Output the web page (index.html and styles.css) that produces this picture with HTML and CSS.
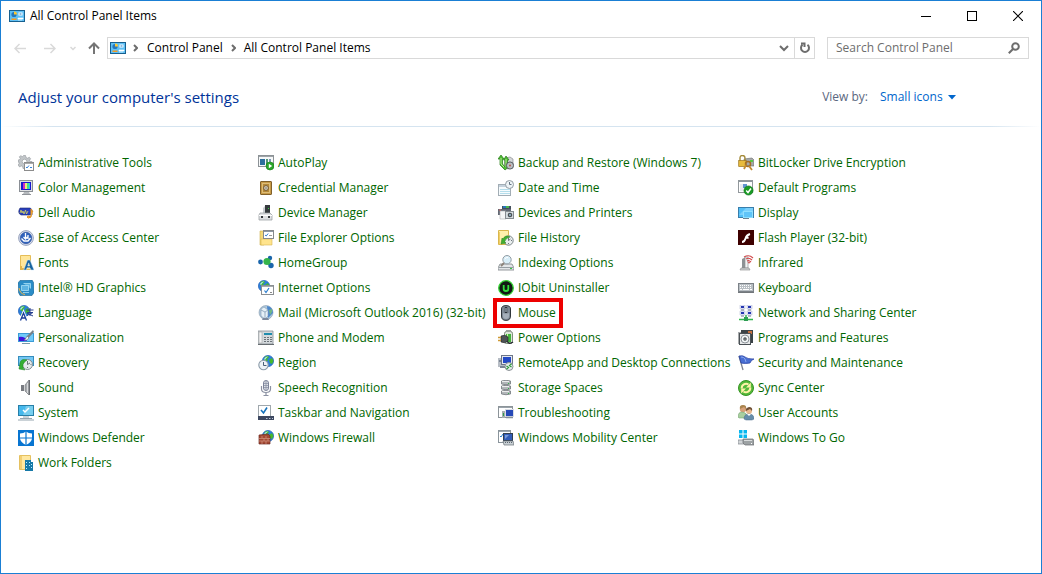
FILE: index.html
```html
<!DOCTYPE html>
<html lang="en">
<head>
    <meta charset="UTF-8">
    <meta name="viewport" content="width=device-width, initial-scale=1.0">
    <title>All Control Panel Items</title>
    <link rel="stylesheet" href="styles.css">
</head>
<body>
    <!-- shared symbols -->
    <svg class="defs" width="0" height="0" aria-hidden="true">
        <symbol id="panel" viewBox="0 0 16 16">
            <rect x=".5" y="2.500" width="15" height="11" fill="#5fc0f5" stroke="#17608f"/>
            <circle cx="5" cy="6.500" r="2.600" fill="#2477bd"/>
            <path d="M5 6.500V3.500a3 3 0 0 1 3 3z" fill="#ffc72e"/>
            <path d="M9.500 4.500h4v3h-4z" fill="#fff"/><path d="M10.500 5.500h2v1h-2z" fill="#2477bd"/>
            <path d="M2.500 10.500h5v1.500h-5z" fill="#f59b20"/><path d="M9 10h5v1H9zM9 12h4" stroke="#fff" fill="#fff" stroke-width=".6"/>
        </symbol>
        <symbol id="globe" viewBox="0 0 12 12">
            <circle cx="6" cy="6" r="5.600" fill="#2b7fdb" stroke="#2462b8" stroke-width=".7"/>
            <path d="M3 1.500l3-.5 1 1.500-2 1.500 1 1.500-2 1-2-2zM7 5l3-2 1.500 3-1.500 3-2-1zM3 8l2 1v2l-2-1z" fill="#45b92e"/>
            <path d="M2 4q1.500-3 4-2.500Q4 3 3 5z" fill="#bfe9ff" opacity=".9"/>
        </symbol>
    </svg>

    <div class="window">
        <header class="titlebar">
            <svg class="icon"><use href="#panel"/></svg>
            <span class="title">All Control Panel Items</span>
            <div class="caption-buttons">
                <button aria-label="Minimize"><svg width="10" height="10"><path d="M0 5.500h10" stroke="#000"/></svg></button>
                <button aria-label="Maximize"><svg width="10" height="10"><rect x=".5" y=".5" width="9" height="9" fill="none" stroke="#000"/></svg></button>
                <button aria-label="Close"><svg width="10" height="10"><path d="M0 0l10 10M10 0L0 10" stroke="#000" stroke-width="1.100"/></svg></button>
            </div>
        </header>

        <nav class="toolbar">
            <div class="nav-buttons">
                <button class="off" aria-label="Back"><svg width="12" height="11" viewBox="0 0 12 11"><path d="M12 5.500H1M5.500 1L1 5.500 5.500 10"/></svg></button>
                <button class="off" aria-label="Forward"><svg width="12" height="11" viewBox="0 0 12 11"><path d="M0 5.500h11M6.500 1L11 5.500 6.500 10"/></svg></button>
                <button class="off recent" aria-label="Recent locations"><svg width="6" height="5" viewBox="0 0 6 5"><path d="M.5 1L3 3.500 5.500 1"/></svg></button>
                <button class="up" aria-label="Up"><svg width="12" height="12" viewBox="0 0 12 12"><path d="M6 12V1.500M1 6.500l5-5 5 5"/></svg></button>
            </div>
            <div class="address">
                <svg class="icon"><use href="#panel"/></svg>
                <svg class="chevron" width="5" height="8"><path d="M1 1l3 3-3 3"/></svg>
                <a href="#">Control Panel</a>
                <svg class="chevron" width="5" height="8"><path d="M1 1l3 3-3 3"/></svg>
                <a href="#">All Control Panel Items</a>
                <button class="history" aria-label="Previous locations"><svg width="10" height="7" viewBox="0 0 10 7"><path d="M1 1l4 4 4-4"/></svg></button>
                <button class="refresh" aria-label="Refresh"><svg width="12" height="12" viewBox="0 0 12 12"><path d="M8.500 2.800a4 4 0 1 1-5 0M2 1.500h3.500V5"/></svg></button>
            </div>
            <div class="search">
                <input type="text" aria-label="Search Control Panel" placeholder="Search Control Panel">
                <svg width="12" height="12" viewBox="0 0 12 12"><circle cx="7.500" cy="4.500" r="3.300"/><path d="M5 7L.8 11.200"/></svg>
            </div>
        </nav>

        <main>
            <div class="heading">
                <h1>Adjust your computer's settings</h1>
                <label for="view">View by:</label>
                <div class="view">
                    <select id="view">
                        <option>Small icons</option>
                    </select>
                    <svg width="8" height="5"><path d="M0 0h8L4 4.500z" fill="#0066cc"/></svg>
                </div>
            </div>

            <ul class="items">
                <li><a href="#"><svg class="icon" viewBox="0 0 16 16"><path d="M5.500.5h2l.5 2 1.500.7 1.800-1 1.300 1.500-1 1.600.5 1.200H14v2l-7 5H5l-.3-2-1.500-.6-1.700 1L.2 10l1-1.700L.7 7H.2V5l1.600-.5.5-1-1-1.700L2.800.7l1.700 1z" fill="#c2c6c9" stroke="#90969b" stroke-width=".6"/><circle cx="6.500" cy="6.500" r="2.300" fill="#fff" stroke="#93989c" stroke-width=".6"/><rect x="6.500" y="7.500" width="9" height="8" fill="#fff" stroke="#8c8c8c"/><path d="M6.500 8.500h9" stroke="#aaa"/><path d="M8 12l1 1 2-2.500M12 12.500h2" fill="none" stroke="#3a85d8"/></svg>Administrative Tools</a></li>
                <li><a href="#"><svg class="icon" viewBox="0 0 16 16"><rect x=".5" y=".5" width="15" height="11" fill="#f6f8f9" stroke="#8c9296"/><path d="M1 1.500h14" stroke="#9ea3a7"/><path d="M2 4h5v6H2z" fill="#2d6f9c"/><path d="M8 4h2v6H8z" fill="#539779"/><path d="M11 4h2v3h-2z" fill="#7c98b3"/><circle cx="12" cy="11" r="4" fill="#2ba52b" stroke="#168016" stroke-width=".6"/><path d="M10.800 8.800v4.400l3.400-2.200z" fill="#fff"/></svg>AutoPlay</a></li>
                <li><a href="#"><svg class="icon" viewBox="0 0 16 16"><path d="M7 3l5-1 3 2v7l-5 3-4-2z" fill="#d3d6d8" stroke="#7c8083" stroke-width=".6"/><path d="M0 4l3-4 3 4H4.500v5L7 12V5H5.500L8 1l3 4H9.500v8L7 15 2 10V4z" fill="#4fba34" stroke="#267c19" stroke-width=".7"/><path d="M3 3v6l3 3M8 4v8" stroke="#b7ef91" fill="none"/><circle cx="12" cy="10.500" r="3.600" fill="#b9bdc2" stroke="#3f4347" stroke-width=".8"/><circle cx="12" cy="10.500" r="1" fill="#b95a4a"/></svg>Backup and Restore (Windows 7)</a></li>
                <li><a href="#"><svg class="icon" viewBox="0 0 16 16"><path d="M6 4l8-1 2 2v6H7z" fill="#a6a9a9" stroke="#686c6c" stroke-width=".6"/><path d="M12 5h3v2h-3z" fill="#57c843"/><path d="M2 6V3q0-2.500 2.500-2.500T7 3v3" fill="none" stroke="#a48a39" stroke-width="1.400"/><rect x=".7" y="5.500" width="7.500" height="6" fill="#e8bb3c" stroke="#9b741b" stroke-width=".7"/><circle cx="10" cy="9" r="2.500" fill="none" stroke="#a46e24" stroke-width="1.500"/><path d="M8 10l-2 4M11 11l3 4" stroke="#c18a30" stroke-width="1.800"/></svg>BitLocker Drive Encryption</a></li>

                <li><a href="#"><svg class="icon" viewBox="0 0 16 16"><rect x="1.500" y=".5" width="13" height="11" fill="#dee0e2" stroke="#8a8f95"/><path d="M3 2h10v8H3z" fill="#1818cf"/><path d="M5 3h2v6H5z" fill="#d02cc4"/><path d="M7 3h2v6H7z" fill="#f0ef76"/><path d="M9 3h2v6H9z" fill="#47df8a"/><path d="M11 3h1v6h-1z" fill="#2ac2ff"/><path d="M6 12h5l1 2H5z" fill="#b5b9bd"/><path d="M4 14.500h9" stroke="#8f9398" fill="none"/></svg>Color Management</a></li>
                <li><a href="#"><svg class="icon" viewBox="0 0 16 16"><rect x="2.500" y="1.500" width="11" height="13" rx=".5" fill="#c79a47" stroke="#80602b"/><rect x="4.500" y="3.500" width="7" height="9" fill="#b58838" stroke="#ddbd78"/><circle cx="8" cy="8" r="2.400" fill="#f2ead5" stroke="#6d5634"/><path d="M6.500 8h3M8 6.500v3" stroke="#7c776d" stroke-width=".7"/></svg>Credential Manager</a></li>
                <li><a href="#"><svg class="icon" viewBox="0 0 16 16"><rect x=".5" y="4.500" width="12" height="11" fill="#f6fbfd" stroke="#a2adb5"/><path d="M1 6h11" stroke="#c5d2dc" stroke-width="2"/><path d="M2.500 9.500h9M2.500 11.500h9M2.500 13.500h9" stroke="#72bfd8" stroke-dasharray="1 1"/><circle cx="11.500" cy="4.500" r="4" fill="#edf3f6" stroke="#939ca3"/><path d="M11.500 2v2.500h2" fill="none" stroke="#637280"/></svg>Date and Time</a></li>
                <li><a href="#"><svg class="icon" viewBox="0 0 16 16"><rect x=".5" y=".5" width="14" height="12" fill="#fff" stroke="#92989c"/><path d="M1 1.500h13" stroke="#8c979e"/><path d="M2 4h3v7H2z" fill="#e7ecf0"/><path d="M5 4h4v4H5z" fill="#6095d1"/><circle cx="10.500" cy="10.500" r="4.600" fill="#199b25" stroke="#0d7019" stroke-width=".6"/><path d="M8.200 10.600l1.800 1.900 3-4" fill="none" stroke="#fff" stroke-width="1.500"/></svg>Default Programs</a></li>

                <li><a href="#"><svg class="icon" viewBox="0 0 16 16"><path d="M2 3h10q3 1 2 7H3Q-1 8 2 3z" fill="#293ebc" stroke="#1b286f" stroke-width=".6"/><path d="M2 8l1-3 1 3 1-2 1 3 1.500-4 1 4 1.500-3" fill="none" stroke="#d7d660" stroke-width=".8"/><path d="M13 12V4l2 3M13 12q-3-2-4 0 1 2 4 0" fill="#f5b143" stroke="#e49120"/></svg>Dell Audio</a></li>
                <li><a href="#"><svg class="icon" viewBox="0 0 16 16"><path d="M7 0h5v9H7z" fill="#363b3e"/><path d="M5 3l2-2v8H5z" fill="#c9ced1"/><path d="M10 3h1v1h-1z" fill="#3bd741"/><path d="M2 8h10l2 2v5H1v-5z" fill="#dfe1e3" stroke="#94989c" stroke-width=".7"/><path d="M3 11h2v2H3zM10 11h2v2h-2z" fill="#34383c"/><path d="M1 10.500h13" stroke="#fff"/></svg>Device Manager</a></li>
                <li><a href="#"><svg class="icon" viewBox="0 0 16 16"><path d="M4 1h9v5H4z" fill="#44515d"/><path d="M5 1h3v2H5z" fill="#2976ba"/><path d="M8 1h3v2H8z" fill="#49b64e"/><path d="M0 4h13v6H0z" fill="#636974"/><path d="M2 6h6v8H2z" fill="#f5f6f7" stroke="#adb0b3" stroke-width=".6"/><path d="M1 5h2" stroke="#df6e67"/><rect x="7.500" y="6.500" width="8" height="7" fill="#d4dbdf" stroke="#868c91"/><circle cx="12" cy="10" r="2.300" fill="#4b5055"/><circle cx="12" cy="10" r="1" fill="#9ac0d4"/></svg>Devices and Printers</a></li>
                <li><a href="#"><svg class="icon" viewBox="0 0 16 16"><rect x=".5" y="2.500" width="15" height="10" fill="#52bff7" stroke="#397eab"/><path d="M1 10l7-7h7v7z" fill="#7bd0fb"/><rect x="5.500" y="6.500" width="9" height="6" fill="#5fc4f8" stroke="#8fe0ff"/><path d="M5 13h6v1H5z" fill="#6c8290"/></svg>Display</a></li>

                <li><a href="#"><svg class="icon" viewBox="0 0 16 16"><circle cx="8" cy="8" r="7.400" fill="#d8dfef" stroke="#8490ae" stroke-width=".8"/><circle cx="8" cy="8" r="5.700" fill="#2f62bd" stroke="#264a92" stroke-width=".6"/><path d="M7.500 3v6M3.500 8.500L6 11h4l2.500-3M10 5v4M5.500 7l2 2 2-2" fill="none" stroke="#fff" stroke-width="1.300"/></svg>Ease of Access Center</a></li>
                <li><a href="#"><svg class="icon" viewBox="0 0 16 16"><path d="M2 1h4v14H2z" fill="#f4d875" stroke="#cfae4a" stroke-width=".6"/><path d="M3 9h11v6H3z" fill="#ffe48d" stroke="#d9b752" stroke-width=".6"/><rect x="5.500" y=".5" width="10" height="8" fill="#fff" stroke="#86898c"/><path d="M6 1.500h9" stroke="#8d98a5"/><path d="M7 5l1.200 1 2-2.500" stroke="#337fd1" fill="none"/><path d="M11 5.500h3" stroke="#999"/></svg>File Explorer Options</a></li>
                <li><a href="#"><svg class="icon" viewBox="0 0 16 16"><path d="M.5.5h10v14H.5z" fill="#fff0ac" stroke="#d9b74d"/><path d="M1 2h1v12H1z" fill="#f1ce65"/><circle cx="10.500" cy="10.500" r="4.700" fill="#e9eeef" stroke="#7b8587"/><path d="M10.500 7.500v3l2-1.500M14 10.500h-1M10.500 14v-1" stroke="#4c575c" fill="none" stroke-width=".8"/><path d="M4 8l-1 6 5-1-1.300-1.300Q8 7.500 12 7 7 4.500 5 9z" fill="#41af31" stroke="#247f19" stroke-width=".5"/></svg>File History</a></li>
                <li><a href="#"><svg class="icon" viewBox="0 0 16 16"><path d="M0 0h16v15H0z" fill="#3e0000"/><path d="M4 12q2.500 0 3.500-3.500T12 4M7 7.700h3.600" fill="none" stroke="#fff" stroke-width="1.900"/></svg>Flash Player (32-bit)</a></li>

                <li><a href="#"><svg class="icon" viewBox="0 0 16 16"><path d="M2.500.5h10v14h-10z" fill="#ffe699" stroke="#e5bd58"/><path d="M2 11v4h5l-1-2H4v-2z" fill="#e1b54c"/><path d="M5.700 15h2.500l.8-2.200h3L13 15h3L12 5H9.500zm4-4l1-3.100 1 3.100z" fill="#18649f" stroke="#cce9ff" stroke-width=".5"/></svg>Fonts</a></li>
                <li><a href="#"><svg class="icon" viewBox="0 0 16 16"><path d="M9 7l3-4M9 7l4 3" stroke="#2d9a8c" stroke-width="2.500" fill="none"/><circle cx="2.500" cy="7" r="2.400" fill="#1965ab"/><circle cx="12" cy="3" r="2.200" fill="#1965ab"/><circle cx="13" cy="10.500" r="2.700" fill="#1965ab"/><circle cx="9" cy="6.500" r="3.600" fill="#35b44c"/></svg>HomeGroup</a></li>
                <li><a href="#"><svg class="icon" viewBox="0 0 16 16"><path d="M2 9h12l2 4v2H0v-2z" fill="#e3e6e8" stroke="#7b8185" stroke-width=".8"/><path d="M1 12.500h14" stroke="#969ea3"/><path d="M12 13h2v1h-2z" fill="#38c541"/><circle cx="9" cy="4.700" r="4.200" fill="#d8eef8" stroke="#939da4"/><path d="M6 8L3 11" stroke="#8b8178" stroke-width="1.800"/><path d="M6.800 4Q8 2 10 2.500" stroke="#fff" fill="none"/></svg>Indexing Options</a></li>
                <li><a href="#"><svg class="icon" viewBox="0 0 16 16"><path d="M4 4l4-2v11l-4 2z" fill="#8d9295"/><path d="M7 2h3v11H7z" fill="#f3f4f4" stroke="#919497" stroke-width=".7"/><path d="M3 13h8l1 2H2z" fill="#cfd2d3" stroke="#888" stroke-width=".6"/><path d="M6 2q5-3 9 1M8 4q3-2 6 1M9 6q2-1 4 1M10 8q1-1 2 0" fill="none" stroke="#d0484a" stroke-width="1.100"/></svg>Infrared</a></li>

                <li><a href="#"><svg class="icon" viewBox="0 0 16 16"><path d="M2 .5L14 0l1.500 2.500.5 10-2 3H2l-1.500-3L0 3z" fill="#2b8cc6" stroke="#17618e" stroke-width=".6"/><path d="M3.500 5.500h7v5h-7zM5.500 3.500h7v5M5 12.500h6" fill="#5db4e2" stroke="#a9dff6" stroke-width=".8"/><path d="M1 8q1 6 6 6.500" stroke="#efb54b" fill="none"/></svg>Intel® HD Graphics</a></li>
                <li><a href="#"><svg class="icon" viewBox="0 0 16 16"><use href="#globe" x="0" y="0" width="12" height="12"/><rect x="3.500" y="5.500" width="12" height="9" fill="#fff" stroke="#8b8f92"/><path d="M4 6.500h11" stroke="#a5aaae"/><path d="M6.500 10.500l1.500 2 3-4.500" fill="none" stroke="#287ccf" stroke-width="1.200"/><path d="M12 12.500h2" stroke="#888"/></svg>Internet Options</a></li>
                <li><a href="#"><svg class="icon" viewBox="0 0 16 16"><circle cx="8" cy="8" r="7.300" fill="#121a14" stroke="#35d334" stroke-width="1.300"/><path d="M5.700 5v4q0 2 2.300 2t2.300-2V5" fill="none" stroke="#31df3b" stroke-width="1.800"/></svg>IObit Uninstaller</a></li>
                <li><a href="#"><svg class="icon" viewBox="0 0 16 16"><rect x=".5" y="3.500" width="15" height="8" fill="#b9bfc4" stroke="#7c8288"/><path d="M2 5.500h12M2 7.500h12" stroke="#fff" stroke-dasharray="1 1"/><path d="M2 9.500h2M5 9.500h6M12 9.500h2" stroke="#fff"/><path d="M0 12.500h16" stroke="#72777b"/></svg>Keyboard</a></li>

                <li><a href="#"><svg class="icon" viewBox="0 0 16 16"><use href="#globe" x="0" y="0" width="12" height="12"/><path d="M2.500 15.500L5.500 8 8.500 15.500M3.500 13h4" fill="none" stroke="#fff" stroke-width="3"/><path d="M2.500 15.500L5.500 8 8.500 15.500M3.500 13h4" fill="none" stroke="#1a3d98" stroke-width="1.300"/><path d="M8.500 5h7M12 3v2M9 7.500h6M12 5v6M9 10.500l6-3M9 8l6 3" stroke="#263e8f" stroke-width="1" fill="none"/></svg>Language</a></li>
                <li><a href="#"><svg class="icon" viewBox="0 0 16 16"><circle cx="8" cy="7.500" r="7" fill="#aec8dc" stroke="#889cae" stroke-width=".6"/><path d="M9 1q6 1 6 7l-5 5z" fill="#4d87cc"/><path d="M11 5l3-1v3l-2 3z" fill="#70b784"/><path d="M3 4l3-2 4 3v6l-3 3-4-3z" fill="#e5f0f7" stroke="#8299b2" stroke-width=".6"/><path d="M3 5l4 2 3-2M7 7v6" stroke="#7893ae" fill="none" stroke-width=".7"/><path d="M5 13h5l1 2H4z" fill="#7c899d"/></svg>Mail (Microsoft Outlook 2016) (32-bit)</a></li>
                <li><a class="marked" href="#"><svg class="icon" viewBox="0 0 16 16"><path d="M3.500 4Q3.500.6 8 .6T12.500 4v7q0 4.400-4.500 4.400T3.500 11z" fill="#7e8995" stroke="#2f353b"/><path d="M5 8q3 1 6 0v3q0 3-3 3t-3-3z" fill="#a5afba"/><path d="M8 2v6" stroke="#2b3138" stroke-width="2.400"/><path d="M8 3v4" stroke="#becbd7"/></svg>Mouse</a></li>
                <li><a href="#"><svg class="icon" viewBox="0 0 16 16"><path d="M8 10v4M1 14.500h14" stroke="#2fb84b" stroke-width="1.500"/><path d="M2 0h5v4H2zM9 0h5v4H9zM2 6h5v4H2zM9 6h5v4H9z" fill="#e5e8fb" stroke="#abb2cc" stroke-width=".5"/><path d="M3 1h3v2H3zM10 1h3v2h-3zM3 7h3v2H3zM10 7h3v2h-3z" fill="#2536b0"/><path d="M3 5h3M10 5h3M3 11h3M10 11h3" stroke="#727c95"/><path d="M6 12h4v4H6z" fill="#2d9c53"/></svg>Network and Sharing Center</a></li>

                <li><a href="#"><svg class="icon" viewBox="0 0 16 16"><path d="M0 3h16v9H0z" fill="#3c9bd6"/><path d="M1 4h14v7H1z" fill="#70caf9"/><path d="M1 7q6-1 8 4H1z" fill="#3e14db"/><path d="M4 13.500h8" stroke="#7b9aab"/><path d="M15 0l-6 6 1.500 2L16 2z" fill="#78818a"/><path d="M9 6l2 2q-2 3-5 2 2-1 3-4z" fill="#f4f7f9" stroke="#5e6a73" stroke-width=".6"/></svg>Personalization</a></li>
                <li><a href="#"><svg class="icon" viewBox="0 0 16 16"><path d="M0 1h15v13H0z" fill="#d4d9dc" stroke="#858e94" stroke-width=".8"/><path d="M1 2h3v11H1z" fill="#f1f2f3" stroke="#999" stroke-width=".5"/><path d="M6 3h8v2H6z" fill="#1f8cad"/><path d="M6 7.500h2M9 7.500h2M12 7.500h2M6 9.500h2M9 9.500h2M12 9.500h2M6 11.500h2M9 11.500h2M12 11.500h2" stroke="#6c7379"/><path d="M0 14.500h16" stroke="#676d71"/></svg>Phone and Modem</a></li>
                <li><a href="#"><svg class="icon" viewBox="0 0 16 16"><rect x="6.500" y="1.500" width="8" height="12" rx="2" fill="#dbe6d8" stroke="#637362" stroke-width=".8"/><path d="M8 0h5v2H8z" fill="#9ca39c"/><path d="M8 4h5v8H8z" fill="#43b53c"/><path d="M9 4h1v7H9z" fill="#c6f2a3"/><path d="M3 6q4-2 7 1v4q-3 3-7 1z" fill="#4d5356" stroke="#222" stroke-width=".6"/><path d="M0 7.500h3M0 10.500h3" stroke="#cf9a35" stroke-width="1.300"/><path d="M9 11q2 4 6 1" fill="none" stroke="#282e31" stroke-width="1.500"/></svg>Power Options</a></li>
                <li><a href="#"><svg class="icon" viewBox="0 0 16 16"><path d="M3 0h12v13H3z" fill="#3b4347"/><path d="M10 1h4v3h-4z" fill="#c9703f"/><path d="M0 2h3v12H0z" fill="#a7aaac"/><rect x="1.500" y="3.500" width="11" height="11" fill="#e7e9ea" stroke="#4b5156"/><circle cx="7" cy="9" r="4" fill="#f5f8f9" stroke="#8d949a"/><circle cx="7" cy="9" r="1.700" fill="#3b4347"/><circle cx="7" cy="9" r=".6" fill="#fff"/></svg>Programs and Features</a></li>

                <li><a href="#"><svg class="icon" viewBox="0 0 16 16"><path d="M0 1h16v10H0z" fill="#358dbd"/><path d="M1 2h14v8H1z" fill="#73c7f4"/><circle cx="9.500" cy="9.500" r="5" fill="#e5eaec" stroke="#818c91"/><path d="M9.500 6v3.500L12 8M13.500 9.500h-1M9.500 13v-1" stroke="#4b575b" fill="none" stroke-width=".8"/><path d="M2 8l-1 6 6 1-1.500-1.500Q3 9 9 5 3 3 2 8z" fill="#36ae32" stroke="#198022" stroke-width=".5"/></svg>Recovery</a></li>
                <li><a href="#"><svg class="icon" viewBox="0 0 16 16"><use href="#globe" x="4" y="0" width="12" height="12"/><circle cx="5.500" cy="10" r="4.700" fill="#eef3f6" stroke="#8b9ba9" stroke-width="1.100"/><path d="M5.500 7v3.500h3" fill="none" stroke="#4c6078"/></svg>Region</a></li>
                <li><a href="#"><svg class="icon" viewBox="0 0 16 16"><path d="M0 3h7v9H0z" fill="#b7bdc5"/><rect x="3.500" y=".5" width="11" height="9" fill="#e5e8ee" stroke="#6c7587"/><path d="M5 2h8v6H5z" fill="#2349c6"/><path d="M1 5h2v2H1zM2 11h6v2H2z" fill="#7a8594"/><circle cx="11" cy="11.500" r="4" fill="#e7ebed" stroke="#8b9095"/><path d="M8.500 11l2 1.500-2 1.500M13.500 9l-2 1.500 2 1.500" fill="none" stroke="#279b34" stroke-width="1.200"/></svg>RemoteApp and Desktop Connections</a></li>
                <li><a href="#"><svg class="icon" viewBox="0 0 16 16"><path d="M1 1l4 14" stroke="#7e8390" stroke-width="1.300"/><path d="M1 1q4-1 6 1t9 2q-3 1-4 4-5 1-9 0z" fill="#496ed2" stroke="#243c9d" stroke-width=".7"/><path d="M3 2q3 0 4 2l1 3" fill="none" stroke="#8da9ed"/></svg>Security and Maintenance</a></li>

                <li><a href="#"><svg class="icon" viewBox="0 0 16 16"><path d="M3 5h3v6H3z" fill="#777a80"/><path d="M7 5l4-5v15l-4-4z" fill="#a8abaf" stroke="#686b71" stroke-width=".6"/><path d="M9.500 3v10" stroke="#d7d9db"/><path d="M11.500 0v15" stroke="#6b6e73"/></svg>Sound</a></li>
                <li><a href="#"><svg class="icon" viewBox="0 0 16 16"><rect x="5.500" y=".5" width="5" height="10" rx="2.500" fill="#dee1e8" stroke="#7c839a"/><path d="M6 3.500h4M6 5.500h4M6 7.500h4M8 1v9" stroke="#8b92a4" stroke-width=".8"/><path d="M3.500 6v3q0 3.500 4.500 3.500T12.500 9V6M8 12.500V15M5.500 15.500h5" fill="none" stroke="#8c92a3" stroke-width="1.200"/></svg>Speech Recognition</a></li>
                <li><a href="#"><svg class="icon" viewBox="0 0 16 16"><path d="M3.500 1q4.500-1.500 9 0v3q-4.500 1.500-9 0zM3.500 6q4.500-1.500 9 0v3q-4.500 1.500-9 0zM3.500 11q4.500-1.500 9 0v3q-4.500 1.500-9 0z" fill="#b3b7ba" stroke="#74797d" stroke-width=".8"/><path d="M4 1.500h7M4 6.500h7M4 11.500h7" stroke="#eceded"/><path d="M10 3h1v1h-1zM10 8h1v1h-1zM10 13h1v1h-1z" fill="#36b749"/></svg>Storage Spaces</a></li>
                <li><a href="#"><svg class="icon" viewBox="0 0 16 16"><circle cx="8" cy="8" r="7.500" fill="#54b83a" stroke="#379424"/><path d="M3.700 8.500A4.400 4.400 0 0 1 10.500 4.500M12.300 7.500A4.400 4.400 0 0 1 5.500 11.500" fill="none" stroke="#fff3a9" stroke-width="2"/><path d="M12.800 2.500v5H8zM3.200 13.500v-5H8z" fill="#fff3a9"/></svg>Sync Center</a></li>

                <li><a href="#"><svg class="icon" viewBox="0 0 16 16"><path d="M0 0h16v11H0z" fill="#277fa8"/><path d="M1 1h14v9H1z" fill="#46b8ec"/><path d="M8 1h7v9H5z" fill="#78ceef"/><path d="M5 5l2 2 4-4" fill="none" stroke="#fff" stroke-width="1.500"/><path d="M5 12h6M2 13.500h12M0 15h16" fill="none" stroke="#8b9ba6" stroke-width=".9"/></svg>System</a></li>
                <li><a href="#"><svg class="icon" viewBox="0 0 16 16"><rect x=".5" y=".5" width="12" height="12" fill="#fff" stroke="#a0a8ad"/><path d="M3 5l2.500 3L9 2.500" fill="none" stroke="#1672bc" stroke-width="1.600"/><path d="M0 11h16v4H0z" fill="#3c4760"/><path d="M8 13.500h1.500M11 13.500h1.500M14 13.500h1" stroke="#bac6d7"/></svg>Taskbar and Navigation</a></li>
                <li><a href="#"><svg class="icon" viewBox="0 0 16 16"><rect x=".5" y="1.500" width="14" height="11" fill="#fff" stroke="#8c9499"/><path d="M1 2.500h13" stroke="#9aa3aa"/><rect x="7.500" y="4.500" width="8" height="7" fill="#2648b7" stroke="#d9dde5"/><path d="M4 6h3v7H4z" fill="#a5adb1"/><path d="M5 8h1v3H5z" fill="#2e9e48"/><path d="M8 12.500h7" stroke="#848f9b" stroke-width="1.500"/></svg>Troubleshooting</a></li>
                <li><a href="#"><svg class="icon" viewBox="0 0 16 16"><circle cx="5" cy="4" r="3.200" fill="#d8a17a"/><path d="M2 4q-1-4 3-4t3 4L6 2z" fill="#a9854f"/><path d="M0 12q0-5 4-5t5 4v2H1z" fill="#a9cfa0" stroke="#6a9a66" stroke-width=".5"/><circle cx="11" cy="6" r="3" fill="#eab88c"/><path d="M8 6q-1-3 3-4 4 0 3 4l-2-2z" fill="#705036"/><path d="M6 14q0-5 5-5t5 5l-2 1H8z" fill="#668daa" stroke="#486b88" stroke-width=".5"/><path d="M9 9l2 2 2-2" fill="#fff"/></svg>User Accounts</a></li>

                <li><a href="#"><svg class="icon" viewBox="0 0 16 16"><path d="M0 0h16v16H0z" fill="#0875d1"/><path d="M8 1.500q2.500 2 6 2V8q0 4-6 7-6-3-6-7V3.500q3.500 0 6-2z" fill="#fff"/><path d="M8 1v14M1.500 8h13" stroke="#0875d1" stroke-width="1.200"/></svg>Windows Defender</a></li>
                <li><a href="#"><svg class="icon" viewBox="0 0 16 16"><use href="#globe" x="4" y="0" width="12" height="12"/><path d="M1 5l9-1 2 2v8H1z" fill="#a34833" stroke="#6f2c22" stroke-width=".7"/><path d="M1 8.500h11M1 11h11M4 6v2M8 6v2M6 8.500V11M10 8.500V11M4 11v3M8 11v3" stroke="#d49a84" stroke-width=".7"/></svg>Windows Firewall</a></li>
                <li><a href="#"><svg class="icon" viewBox="0 0 16 16"><rect x=".5" y=".5" width="12" height="12" fill="#fff" stroke="#8b959c"/><path d="M1 1.500h11" stroke="#9ca7af"/><path d="M2 6l1 1 2-3" fill="none" stroke="#227ccb"/><rect x="5.500" y="3.500" width="9" height="7" fill="#315cb7" stroke="#303e50"/><path d="M7 5h4l-4 4z" fill="#789bdc"/><path d="M5 11h10l1 4H6z" fill="#c9d0d5" stroke="#687177" stroke-width=".7"/><path d="M7 12.500h7" stroke="#5d6870" stroke-dasharray="1 1"/></svg>Windows Mobility Center</a></li>
                <li><a href="#"><svg class="icon" viewBox="0 0 16 16"><path d="M1 0h3.500v3.500H1zM5.500 0H9v3.500H5.500zM1 4.500h3.500V8H1zM5.500 4.500H9V8H5.500z" fill="#09b7ef"/><path d="M0 10h6v4H0z" fill="#d1d5d7" stroke="#7f8589" stroke-width=".7"/><path d="M5 9h10l1 2v4H7l-2-2z" fill="#9da2a4" stroke="#686c70" stroke-width=".7"/><path d="M6 10.500h8" stroke="#d9dcdd"/><path d="M13 13h1v1h-1z" fill="#fff"/></svg>Windows To Go</a></li>

                <li><a href="#"><svg class="icon" viewBox="0 0 16 16"><path d="M1.500.5h11v14h-11z" fill="#ffe8a0" stroke="#e5c160"/><path d="M2 1h2v13H2z" fill="#f3cf72"/><path d="M7 5h6v2h2v9H7z" fill="#1679a8"/><path d="M8 7h1v1H8zM11 7h1v1h-1zM8 10h1v1H8zM11 10h1v1h-1zM8 13h1v1H8zM13 9h1v1h-1zM13 12h1v1h-1z" fill="#b9edff"/></svg>Work Folders</a></li>
            </ul>
        </main>
    </div>
</body>
</html>
```
FILE: styles.css
```css
* {
    box-sizing: border-box;
}

body {
    margin: 0;
    background: #fff;
    color: #000;
    font-family: "Segoe UI", "Open Sans", "Noto Sans", sans-serif;
    font-size: 12px;
    line-height: 16px;
}

a {
    color: inherit;
    text-decoration: none;
}

button {
    display: flex;
    align-items: center;
    justify-content: center;
    padding: 0;
    border: none;
    background: none;
}

svg {
    flex: none;
}

.defs {
    position: absolute;
}

.icon {
    width: 16px;
    height: 16px;
}

.window {
    min-height: 100vh;
    border: 1px solid #1a7fd4;
}

/* title bar */
.titlebar {
    display: flex;
    align-items: center;
    gap: 5px;
    height: 29px;
    padding-left: 8px;
}

.caption-buttons {
    display: flex;
    margin-left: auto;
}

.caption-buttons button {
    width: 46px;
    height: 29px;
}

/* navigation and address bar */
.toolbar {
    display: flex;
    align-items: center;
    padding: 7px 12px 0 13px;
}

.nav-buttons {
    display: flex;
    align-items: center;
    width: 93px;
    gap: 18px;
}

.nav-buttons path {
    fill: none;
    stroke: #757575;
    stroke-width: 2;
}

.nav-buttons .off path {
    stroke: #d9d9d9;
    stroke-width: 1.5;
}

.nav-buttons .recent {
    margin-left: -4px;
}

.nav-buttons .up {
    margin-left: -6px;
}

.address {
    display: flex;
    flex: 1;
    align-items: center;
    height: 22px;
    padding-left: 2px;
    border: 1px solid #d9d9d9;
}

.address a {
    margin: 0 8px;
}

.address path,
.search path,
.search circle {
    fill: none;
    stroke: #6d6d6d;
    stroke-width: 2;
}

.address .icon + .chevron {
    margin: 0 1px 0 7px;
}

.history {
    width: 20px;
    height: 20px;
    margin-left: auto;
}

.refresh {
    width: 20px;
    height: 20px;
    border-left: 1px solid #d9d9d9;
}

.search {
    display: flex;
    align-items: center;
    width: 202px;
    height: 22px;
    margin-left: 12px;
    padding: 0 8px;
    border: 1px solid #d9d9d9;
}

.search input {
    flex: 1;
    min-width: 0;
    padding: 0;
    border: none;
    outline: none;
    font: inherit;
}

.search input::placeholder {
    color: #6d6d6d;
}

/* heading */
.heading {
    display: flex;
    align-items: center;
    height: 68px;
    margin-bottom: 24px;
    padding: 8px 85px 0 17px;
    background: linear-gradient(to right, #fff, #d5e4f0 5%, #d5e4f0 95%, #fff) bottom / 100% 1px no-repeat;
}

.heading h1 {
    flex: 1;
    margin: 0;
    color: #003399;
    font-size: 15px;
    font-weight: normal;
    line-height: 24px;
}

.heading label {
    margin-right: 12px;
    color: #5a6780;
}

.view {
    display: flex;
    align-items: center;
    gap: 5px;
    color: #0066cc;
}

.view select {
    padding: 0;
    border: none;
    appearance: none;
    background: none;
    color: inherit;
    font: inherit;
}

/* control panel items */
.items {
    display: grid;
    grid-template-columns: repeat(auto-fill, 240px);
    margin: 0;
    padding: 0 0 0 17px;
    list-style: none;
    color: #006600;
}

.items li {
    height: 25px;
    padding-top: 4px;
}

.items a {
    display: inline-flex;
    position: relative;
    align-items: center;
    gap: 4px;
    white-space: nowrap;
}

.items a.marked::after {
    content: "";
    position: absolute;
    inset: -7px -7px -7px -5px;
    border: 4px solid #ed0000;
}
```
